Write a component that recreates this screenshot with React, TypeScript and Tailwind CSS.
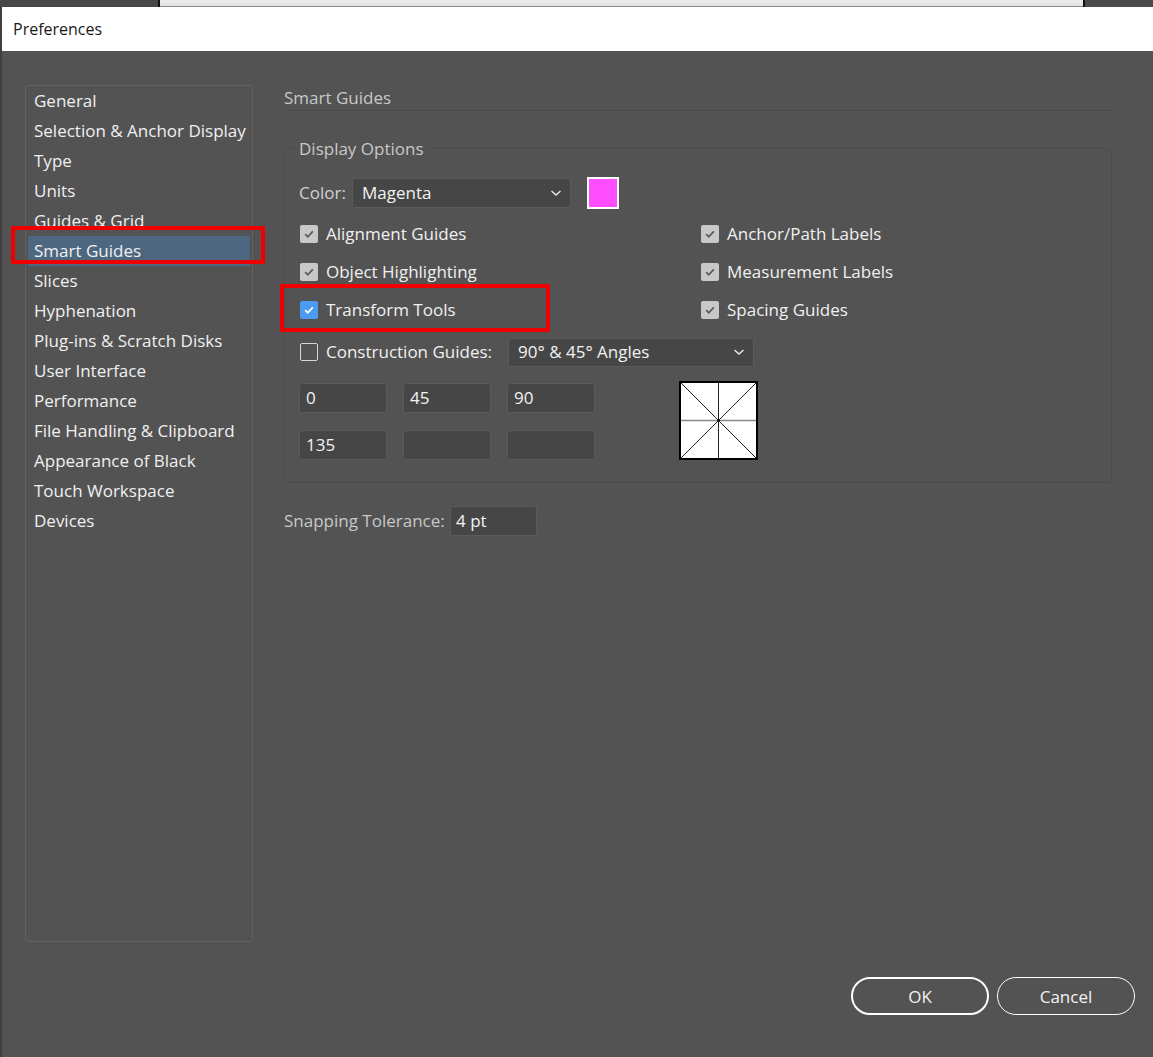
import { FC } from "react";

const font = { fontFamily: '"Open Sans", "Noto Sans", sans-serif' };

const items = [
  "General",
  "Selection & Anchor Display",
  "Type",
  "Units",
  "Guides & Grid",
  "Smart Guides",
  "Slices",
  "Hyphenation",
  "Plug-ins & Scratch Disks",
  "User Interface",
  "Performance",
  "File Handling & Clipboard",
  "Appearance of Black",
  "Touch Workspace",
  "Devices",
];

type TCheck = { checked?: boolean; blue?: boolean };

const Check: FC<TCheck> = ({ checked = true, blue = false }) => {
  if (!checked) {
    return <div className="w-[18px] h-[18px] rounded-[2px] border-[1.5px] border-[#d6d6d6] shrink-0"></div>;
  }
  return (
    <div
      className={`w-[18px] h-[18px] rounded-[2px] shrink-0 flex items-center justify-center ${
        blue ? "bg-[#4b9cf0]" : "bg-[#c8c8c8]"
      }`}
    >
      <svg width="12" height="12" viewBox="0 0 12 12">
        <polyline
          points="2.2,6.2 4.8,8.8 9.8,3.4"
          fill="none"
          stroke={blue ? "#ffffff" : "#5a5a5a"}
          strokeWidth="1.8"
        />
      </svg>
    </div>
  );
};

const Chevron: FC = () => (
  <svg width="12" height="8" viewBox="0 0 12 8">
    <polyline points="1.5,2 6,6 10.5,2" fill="none" stroke="#e8e8e8" strokeWidth="1.5" />
  </svg>
);

const Field: FC<{ value?: string }> = ({ value = "" }) => (
  <div className="w-[88px] h-[30px] bg-[#464646] border border-[#5b5b5b] rounded-[3px] flex items-center pl-[6px] text-[17px] text-[#f2f2f2]">
    {value}
  </div>
);

const CheckRow: FC<{ label: string } & TCheck> = ({ label, ...rest }) => (
  <div className="flex items-center gap-[8px] h-[24px] text-[17px] text-[#f0f0f0]">
    <Check {...rest} />
    <span>{label}</span>
  </div>
);

export default function App() {
  return (
    <div className="w-[1153px] h-[1057px] bg-[#535353] relative overflow-hidden flex flex-col" style={font}>
      {/* window behind */}
      <div className="h-[7px] flex shrink-0">
        <div className="w-[158px] bg-[#474747]"></div>
        <div className="w-[2px] bg-[#111]"></div>
        <div className="flex-1 bg-gradient-to-b from-[#ededed] to-[#e0e0e0] border-b border-[#8a8a8a]"></div>
        <div className="w-[2px] bg-[#111]"></div>
        <div className="w-[68px] bg-[#4a4a4a]"></div>
      </div>

      <div className="flex-1 flex flex-col border-l-2 border-[#3f3f3f]">
        <div className="h-[44px] bg-white flex items-center pl-[11px] text-[16px] text-[#1a1a1a] shrink-0">
          Preferences
        </div>

        <div className="flex-1 flex flex-col">
          <div className="flex">
            {/* category list */}
            <div className="ml-[23px] mt-[34px] w-[228px] h-[857px] border border-[#626262] rounded-[3px] flex flex-col">
              {items.map((it) => (
                <div
                  key={it}
                  className={`h-[30px] mx-[2px] pl-[6px] flex items-center text-[17px] text-[#f0f0f0] whitespace-nowrap ${
                    it === "Smart Guides" ? "bg-[#4e6781]" : ""
                  }`}
                >
                  {it}
                </div>
              ))}
            </div>

            {/* right side */}
            <div className="ml-[31px] mt-[35px] w-[828px] flex flex-col">
              <div className="h-[25px] border-b border-[#4a4a4a] text-[17px] text-[#c8c8c8] leading-[24px]">
                Smart Guides
              </div>

              <div className="mt-[37px] h-[335px] border border-[#4b4b4b] rounded-[4px] relative pl-[14px] pt-[28px]">
                <div className="absolute left-[10px] -top-[13px] px-[4px] bg-[#535353] text-[17px] text-[#c8c8c8] leading-[26px]">
                  Display Options
                </div>

                <div className="flex items-center h-[32px]">
                  <span className="text-[17px] text-[#d0d0d0] w-[53px]">Color:</span>
                  <div className="w-[219px] h-[30px] bg-[#464646] border border-[#5b5b5b] rounded-[3px] flex items-center justify-between pl-[9px] pr-[8px] text-[17px] text-[#f2f2f2]">
                    <span>Magenta</span>
                    <Chevron />
                  </div>
                  <div className="ml-[16px] w-[32px] h-[32px] border-2 border-white bg-[#ff4cff]"></div>
                </div>

                <div className="grid grid-cols-[401px_1fr] mt-[13px] gap-y-[14px] pl-[1px]">
                  <CheckRow label="Alignment Guides" />
                  <CheckRow label="Anchor/Path Labels" />
                  <CheckRow label="Object Highlighting" />
                  <CheckRow label="Measurement Labels" />
                  <CheckRow label="Transform Tools" blue />
                  <CheckRow label="Spacing Guides" />
                </div>

                <div className="flex items-center mt-[15px] pl-[1px] h-[30px]">
                  <div className="w-[208px]">
                    <CheckRow label="Construction Guides:" checked={false} />
                  </div>
                  <div className="w-[246px] h-[29px] bg-[#464646] border border-[#5b5b5b] rounded-[3px] flex items-center justify-between pl-[9px] pr-[8px] text-[17px] text-[#f2f2f2]">
                    <span>90° &amp; 45° Angles</span>
                    <Chevron />
                  </div>
                </div>

                <div className="flex items-start mt-[16px]">
                  <div className="grid grid-cols-[88px_88px_88px] gap-x-[16px] gap-y-[17px]">
                    <Field value="0" />
                    <Field value="45" />
                    <Field value="90" />
                    <Field value="135" />
                    <Field />
                    <Field />
                  </div>
                  <div className="ml-[84px] -mt-[2px] w-[79px] h-[79px] bg-white border-2 border-black">
                    <svg width="75" height="75" viewBox="0 0 75 75">
                      <line x1="0" y1="0" x2="75" y2="75" stroke="#222" strokeWidth="1" />
                      <line x1="75" y1="0" x2="0" y2="75" stroke="#222" strokeWidth="1" />
                      <line x1="37.5" y1="0" x2="37.5" y2="75" stroke="#222" strokeWidth="1" />
                      <line x1="0" y1="37.5" x2="75" y2="37.5" stroke="#888" strokeWidth="1.5" />
                      <circle cx="37.5" cy="37.5" r="1.5" fill="#111" />
                    </svg>
                  </div>
                </div>
              </div>

              <div className="flex items-center mt-[23px]">
                <span className="text-[17px] text-[#c8c8c8] w-[166px]">Snapping Tolerance:</span>
                <div className="w-[87px] h-[30px] bg-[#464646] border border-[#5b5b5b] rounded-[3px] flex items-center pl-[5px] text-[17px] text-[#f2f2f2]">
                  4 pt
                </div>
              </div>
            </div>
          </div>

          <div className="mt-auto mb-[42px] mr-[18px] flex justify-end gap-[8px]">
            <div className="w-[138px] h-[38px] rounded-full border-[2.5px] border-white flex items-center justify-center text-[17px] text-[#f2f2f2] pt-[1px]">
              OK
            </div>
            <div className="w-[138px] h-[38px] rounded-full border-[1.5px] border-white flex items-center justify-center text-[17px] text-[#f2f2f2] pt-[1px]">
              Cancel
            </div>
          </div>
        </div>
      </div>

      {/* red annotation boxes */}
      <div className="absolute left-[11px] top-[226px] w-[254px] h-[38px] border-[4px] border-[#ee0000]"></div>
      <div className="absolute left-[280px] top-[284px] w-[270px] h-[48px] border-[4px] border-[#ee0000]"></div>
    </div>
  );
}
